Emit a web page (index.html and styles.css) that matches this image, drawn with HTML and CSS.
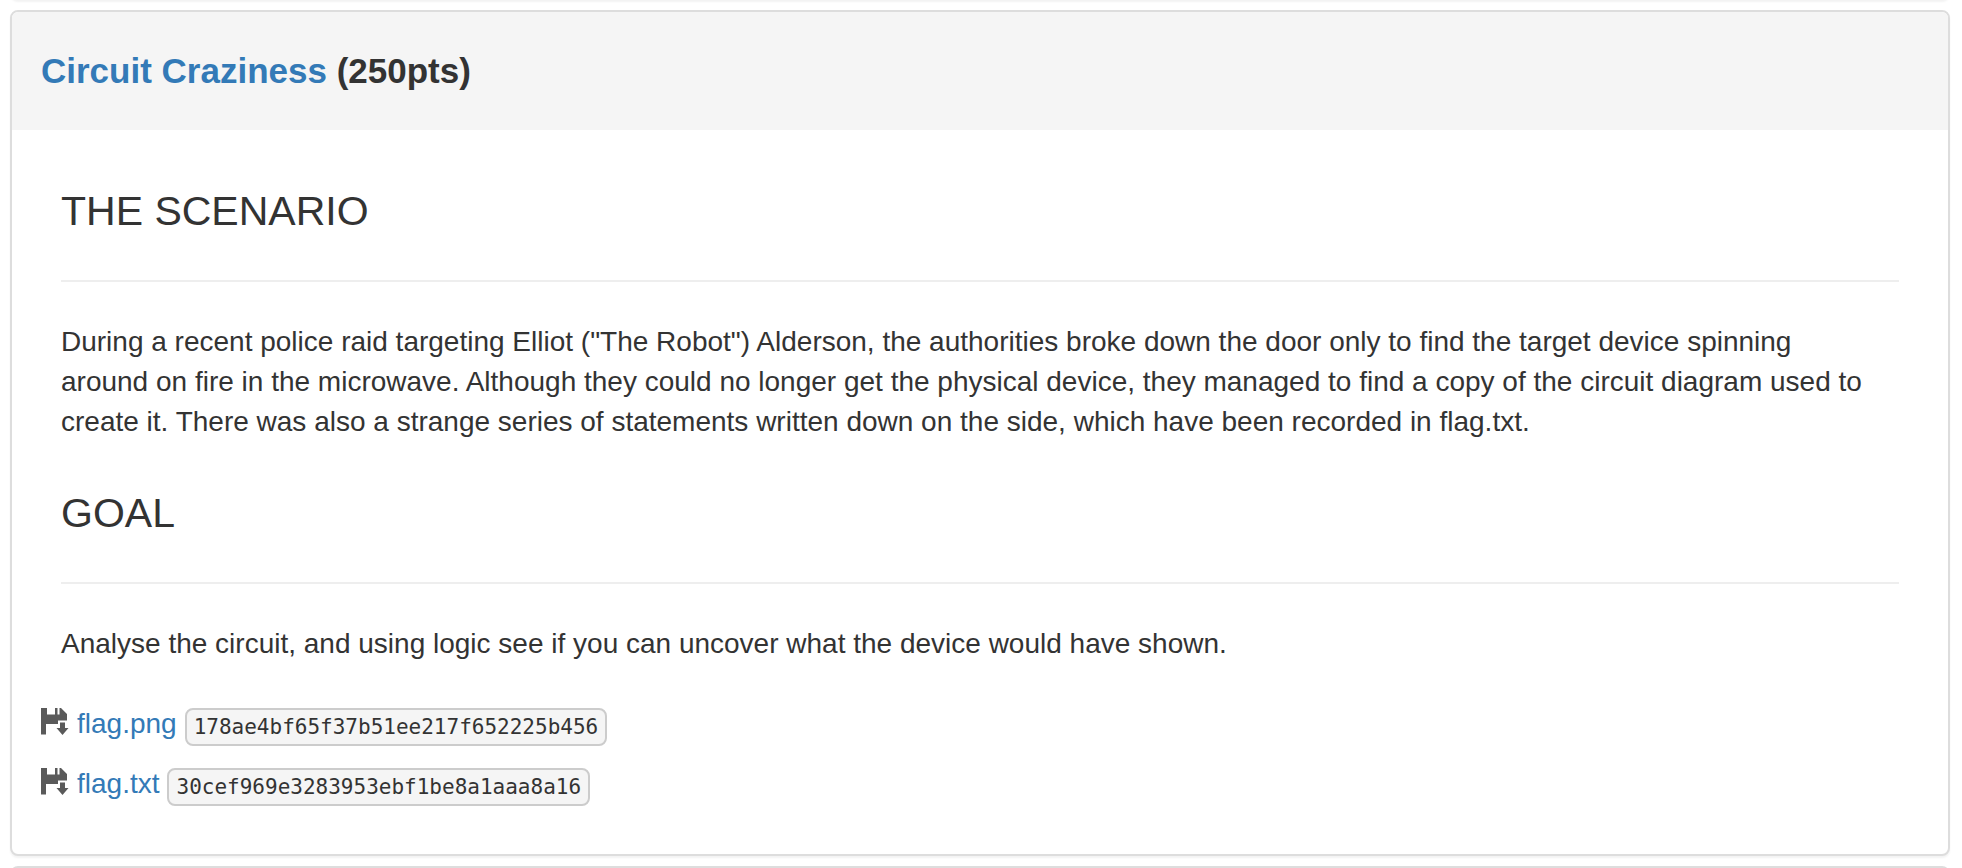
FILE: index.html
```html
<!DOCTYPE html>
<html lang="en">
<head>
<meta charset="utf-8">
<title>Circuit Craziness</title>
<link rel="stylesheet" href="styles.css">
</head>
<body>
<svg class="sprite" aria-hidden="true">
  <symbol id="save" viewBox="0 0 28 28">
    <path d="M0 0H6V6.500H14V0H16.500V6.500H18.500V0H20L26 6V12.500H17V16H5V26.500H0ZM19 14.500H24V20H27.500L21.500 27L15.500 20H19Z"/>
  </symbol>
</svg>
<main class="challenges">
  <div class="panel panel-previous"></div>
  <article class="panel">
    <header class="panel-heading">
      <h1 class="title"><a href="#challenge">Circuit Craziness</a> (250pts)</h1>
    </header>
    <div class="panel-body">
      <div class="description">
        <h2>THE SCENARIO</h2>
        <hr>
        <p>During a recent police raid targeting Elliot ("The Robot") Alderson, the authorities broke down the door only to find the target device spinning<br>
        around on fire in the microwave. Although they could no longer get the physical device, they managed to find a copy of the circuit diagram used to<br>
        create it. There was also a strange series of statements written down on the side, which have been recorded in flag.txt.</p>
        <h2>GOAL</h2>
        <hr>
        <p>Analyse the circuit, and using logic see if you can uncover what the device would have shown.</p>
      </div>
      <ul class="files">
        <li><svg class="icon" aria-hidden="true"><use href="#save"/></svg><a href="#flag-png">flag.png</a><code>178ae4bf65f37b51ee217f652225b456</code></li>
        <li><svg class="icon" aria-hidden="true"><use href="#save"/></svg><a href="#flag-txt">flag.txt</a><code>30cef969e3283953ebf1be8a1aaa8a16</code></li>
      </ul>
    </div>
  </article>
  <div class="panel panel-next"></div>
</main>
</body>
</html>
```
FILE: styles.css
```css
* { box-sizing: border-box; }
body {
  margin: 0;
  background: #fff;
  color: #333;
  font: 28px/40px "Liberation Sans", Arial, sans-serif;
}
a { color: #337ab7; text-decoration: none; }
.sprite { display: none; }
.challenges {
  display: flex;
  flex-direction: column;
  gap: 10px;
  height: 100vh;
  overflow: hidden;
  padding: 0 12px 0 10px;
}
.panel {
  flex: none;
  border: 2px solid #ddd;
  border-radius: 8px;
  background: #fff;
  box-shadow: 0 2px 2px rgba(0, 0, 0, 0.05);
}
.panel-previous, .panel-next { height: 40px; }
.panel-previous { margin-top: -40px; }
.panel-heading {
  padding: 39px 29px;
  background: #f5f5f5;
  border-radius: 6px 6px 0 0;
}
.title { margin: 0; font-size: 35px; line-height: 40px; font-weight: 700; }
.panel-body { padding: 30px 29px; }
.description { margin-bottom: 20px; padding: 20px; }
h2 { margin: 0; font-size: 41px; line-height: 62px; font-weight: 400; }
hr { margin: 38px 0 40px; border: 0; border-top: 2px solid #eee; }
p { margin: 0; }
p + h2 { margin-top: 40px; }
.files {
  display: flex;
  flex-direction: column;
  gap: 20px;
  margin: 0;
  padding: 0 0 20px;
  list-style: none;
}
.files li { display: flex; align-items: center; gap: 8px; height: 40px; }
.icon { width: 28px; height: 28px; fill: #5a5a5a; margin-bottom: 4px; }
code {
  padding: 0 7px;
  border: 2px solid #ccc;
  border-radius: 8px;
  background: #f5f5f5;
  font: 21px/34px "DejaVu Sans Mono", monospace;
  margin-top: 6px;
}
```
